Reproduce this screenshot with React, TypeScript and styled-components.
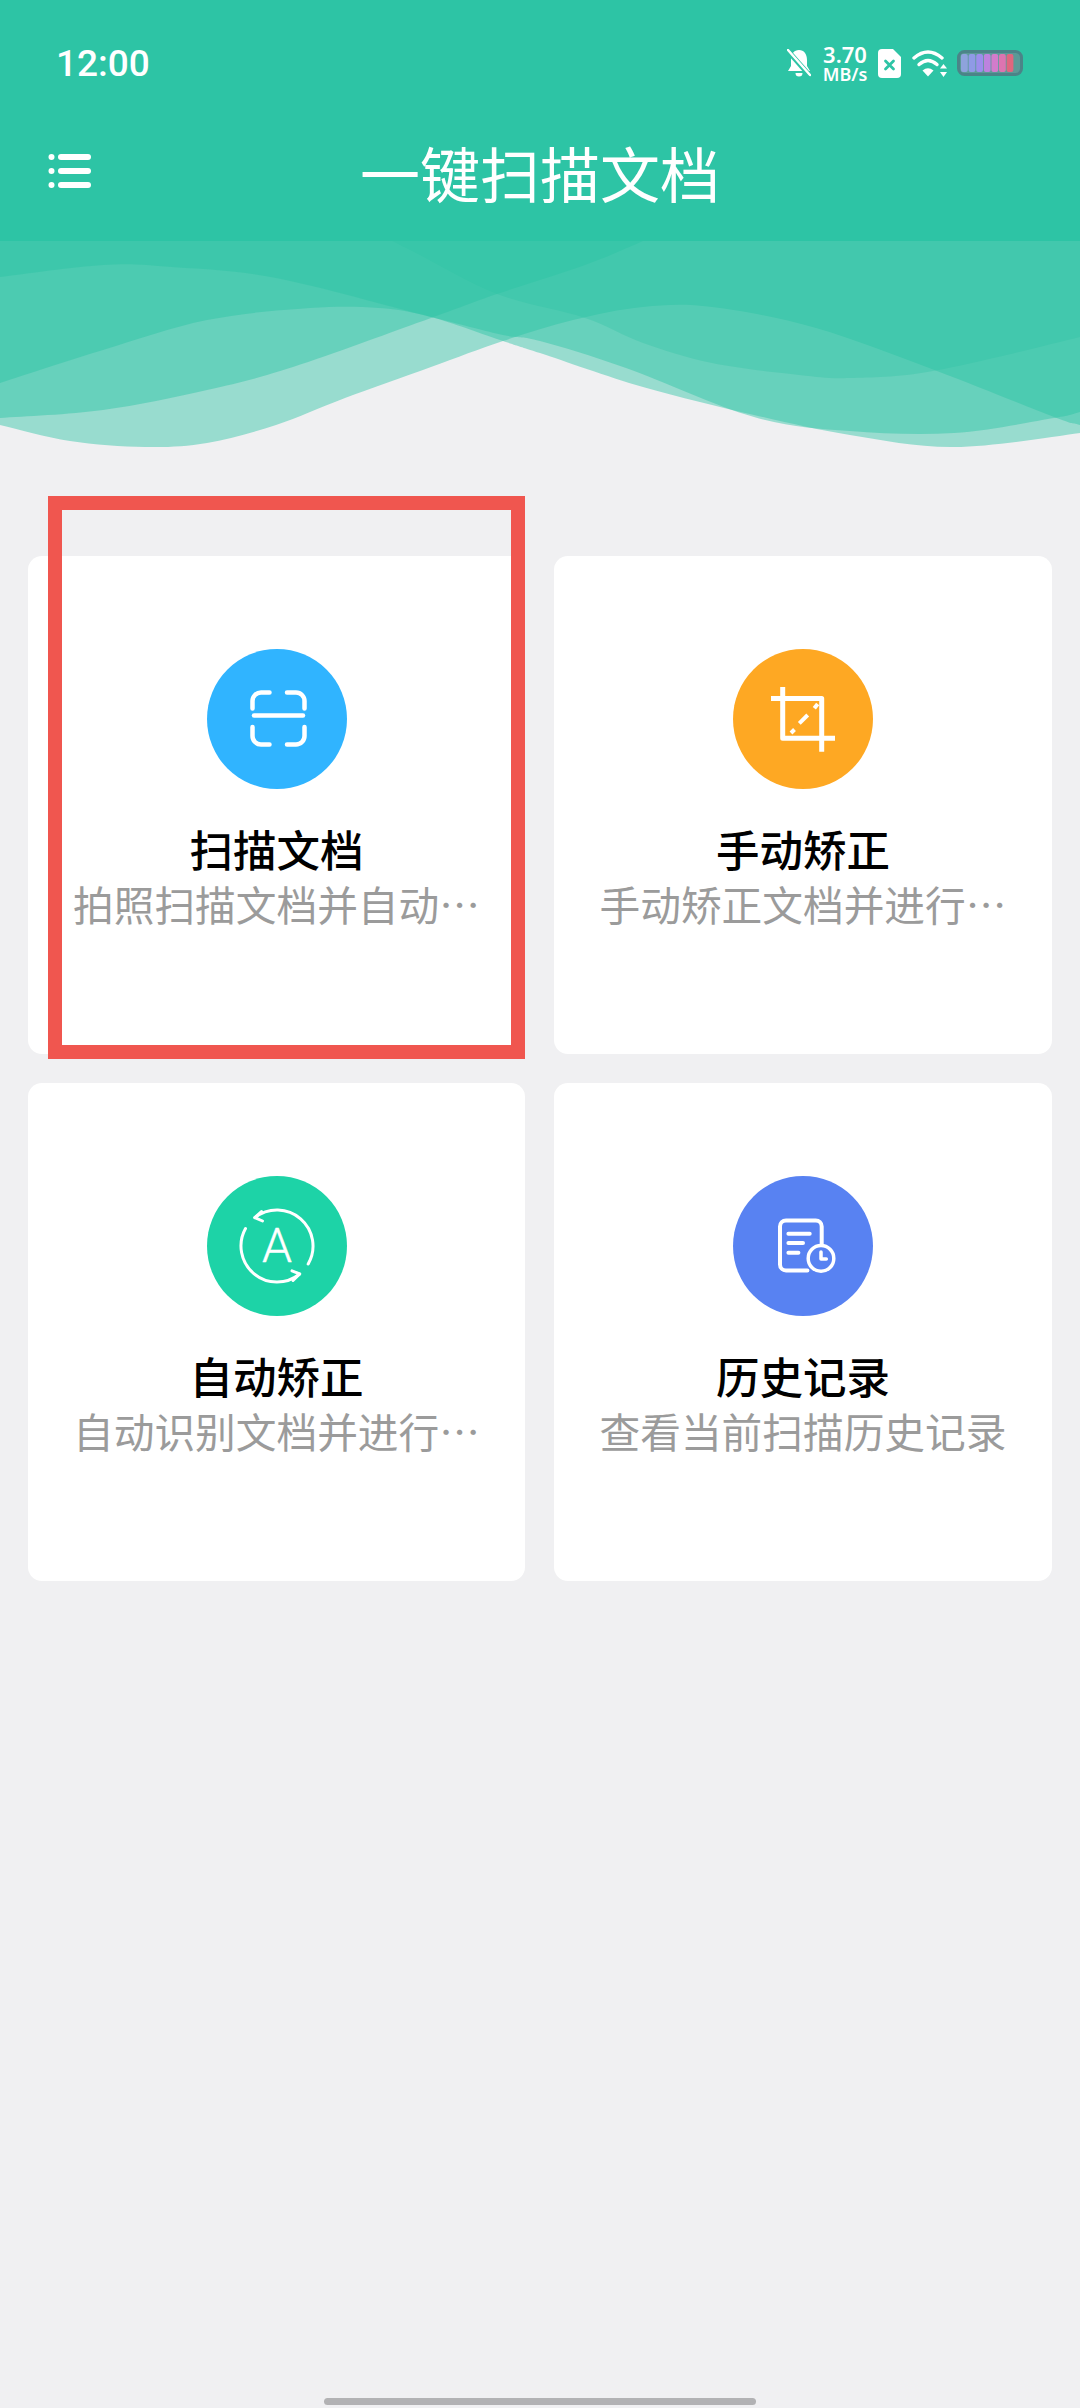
import React from "react";
import styled, { createGlobalStyle } from "styled-components";

const GlobalStyle = createGlobalStyle`
  * {
    box-sizing: border-box;
  }
  html,
  body {
    margin: 0;
    padding: 0;
    background: #f0f0f2;
  }
`;

const brand = "#2dc4a5";
const cjk = `"Noto Sans CJK SC", "Noto Sans", sans-serif`;

const Page = styled.div`
  width: 1080px;
  height: 2408px;
  display: flex;
  flex-direction: column;
  background: #f0f0f2;
  font-family: ${cjk};
  overflow: hidden;
`;

const Header = styled.header`
  height: 241px;
  background: ${brand};
  color: #fff;
`;

const StatusBar = styled.div`
  height: 126px;
  padding: 0 57px 0 56px;
  display: flex;
  align-items: center;
  justify-content: space-between;
`;

const Clock = styled.span`
  padding-top: 1px;
  font-family: Roboto, sans-serif;
  font-size: 37px;
  font-weight: 500;
`;

const StatusIcons = styled.div`
  display: flex;
  align-items: center;
`;

const Speed = styled.div`
  width: 44px;
  display: flex;
  flex-direction: column;
  align-items: center;
  margin: 0 11px 0 12px;
  font-family: "Noto Sans", sans-serif;
  font-weight: 600;
  white-space: nowrap;
`;

const SpeedValue = styled.span`
  font-size: 22px;
  line-height: 21px;
`;

const SpeedUnit = styled.span`
  font-size: 18px;
  line-height: 18px;
`;

const Toolbar = styled.div`
  height: 92px;
  padding: 0 48px;
  display: grid;
  grid-template-columns: 1fr auto 1fr;
  align-items: center;
`;

const Title = styled.h1`
  margin: 0;
  font-size: 60px;
  font-weight: 400;
  line-height: 72px;
`;

const Wave = styled.svg`
  display: block;
  flex: none;
  width: 1080px;
  height: 210px;
`;

const WaveLayer = styled.path<{ $alpha: number }>`
  fill: ${brand};
  fill-opacity: ${(p) => p.$alpha};
`;

const Grid = styled.main`
  display: grid;
  grid-template-columns: 497px 498px;
  grid-auto-rows: 498px;
  gap: 29px;
  padding: 105px 0 0 28px;
`;

const Card = styled.section`
  position: relative;
  display: flex;
  flex-direction: column;
  align-items: center;
  padding-top: 93px;
  background: #fff;
  border-radius: 14px;
`;

const Highlight = styled.div`
  position: absolute;
  left: 20px;
  top: -60px;
  width: 477px;
  height: 563px;
  border: 14px solid #f0564f;
`;

const IconCircle = styled.div<{ $color: string }>`
  width: 140px;
  height: 140px;
  border-radius: 50%;
  background: ${(p) => p.$color};
`;

const CardTitle = styled.h2`
  margin: 34px 0 0;
  color: #000;
  font-size: 43.5px;
  font-weight: 500;
  line-height: 52px;
`;

const CardText = styled.p`
  margin: 5px 0 0;
  color: #9b9b9b;
  font-size: 40.7px;
  font-weight: 400;
  line-height: 48px;
  white-space: nowrap;
`;

const HomeBar = styled.div`
  flex: none;
  align-self: center;
  width: 432px;
  height: 7px;
  margin-top: auto;
  margin-bottom: 3px;
  border-radius: 4px;
  background: #b2b2b4;
`;

const GlyphSvg = styled.svg`
  display: block;
  width: 140px;
  height: 140px;
  fill: none;
  stroke: #fff;
  stroke-linecap: round;
  stroke-linejoin: round;
`;

const GlyphLetter = styled.text`
  fill: #fff;
  stroke: #fff;
  stroke-width: 0.4px;
  font-family: Roboto, sans-serif;
  font-size: 48px;
  font-weight: 300;
`;

// smooth curve through the sampled wave edge points
const smooth = (pts: number[][]) => {
  let d = `M${pts[0][0]} 200 L${pts[0][0]} ${pts[0][1]}`;
  for (let i = 0; i < pts.length - 1; i++) {
    const p0 = pts[Math.max(i - 1, 0)];
    const p1 = pts[i];
    const p2 = pts[i + 1];
    const p3 = pts[Math.min(i + 2, pts.length - 1)];
    const c1x = p1[0] + (p2[0] - p0[0]) / 6;
    const c1y = p1[1] + (p2[1] - p0[1]) / 6;
    const c2x = p2[0] - (p3[0] - p1[0]) / 6;
    const c2y = p2[1] - (p3[1] - p1[1]) / 6;
    d += ` C${c1x} ${c1y} ${c2x} ${c2y} ${p2[0]} ${p2[1]}`;
  }
  return `${d} L${pts[pts.length - 1][0]} 200 Z`;
};

const waves = [
  { alpha: 0.45, pts: [[-40, 415], [0, 425], [70, 441], [145, 447], [207, 443], [276, 425], [345, 398], [431, 367], [503, 341], [573, 320], [643, 307], [712, 307], [816, 328], [937, 371], [1054, 417], [1080, 425], [1120, 436]] },
  { alpha: 0.45, pts: [[-40, 420], [0, 418], [103, 410], [207, 390], [293, 367], [431, 318], [497, 294], [585, 265], [643, 241], [700, 215]] },
  { alpha: 0.32, pts: [[370, 230], [414, 252], [497, 294], [585, 318], [643, 343], [712, 363], [799, 375], [850, 378], [933, 371], [1080, 337], [1120, 325]] },
  { alpha: 0.45, pts: [[-40, 396], [0, 383], [103, 350], [207, 320], [310, 308], [379, 308], [431, 317], [503, 341], [540, 353], [643, 387], [754, 415], [850, 435], [954, 447], [1080, 433], [1120, 424]] },
  { alpha: 0.45, pts: [[-40, 282], [0, 277], [103, 265], [172, 267], [276, 278], [431, 317], [503, 335], [540, 341], [626, 368], [754, 417], [850, 431], [954, 433], [1054, 418], [1080, 412], [1120, 400]] },
];

const batteryBars = ["#8ea3dc", "#8f9ae6", "#9c8eec", "#bd82de", "#d27ccb", "#dd74b0", "#e0667e"];

const BellOff = () => (
  <svg width="24" height="28" viewBox="0 0 24 28">
    <path d="M12 1C17 1 20 5 20 11V17L23 22H1L4 17V11C4 5 7 1 12 1Z" fill="#fff" />
    <path d="M8.5 24H15.5A3.5 3.5 0 0 1 8.5 24Z" fill="#fff" />
    <path d="M1 2L23 27" stroke={brand} strokeWidth="5" />
    <path d="M1 1L23 26" stroke="#fff" strokeWidth="2.4" strokeLinecap="round" />
  </svg>
);

const SimOff = () => (
  <svg width="23" height="29" viewBox="0 0 23 29">
    <path d="M4 0H15L23 8V25A4 4 0 0 1 19 29H4A4 4 0 0 1 0 25V4A4 4 0 0 1 4 0Z" fill="#fff" />
    <path d="M7.5 12L15.5 20M15.5 12L7.5 20" stroke={brand} strokeWidth="2.8" strokeLinecap="round" />
  </svg>
);

const Wifi = () => (
  <svg width="35" height="27" viewBox="0 0 35 27" style={{ marginLeft: 11 }}>
    <g fill="none" stroke="#fff" strokeWidth="3.4" strokeLinecap="round">
      <path d="M2 8Q16 -4 30 8" />
      <path d="M7 14.5Q16 6.5 25 14.5" />
    </g>
    <path d="M10.5 20.5Q16 16 21.5 20.5L16 26.5Z" fill="#fff" />
    <path d="M31.5 14L35 18.5H28Z" fill="#fff" />
    <path d="M31.5 27L35 22H28Z" fill="#fff" />
  </svg>
);

const Battery = () => (
  <svg width="66" height="26" viewBox="0 0 66 26" style={{ marginLeft: 10 }}>
    <rect x="1.5" y="1.5" width="63" height="23" rx="6" fill="#5b9a97" stroke="#4b8488" strokeWidth="3" />
    {batteryBars.map((color, i) => (
      <rect key={color} x={4 + i * 7.6} y="4" width="6.8" height="18" rx="2" fill={color} />
    ))}
  </svg>
);

const MenuIcon = () => (
  <svg width="44" height="36" viewBox="0 0 44 36">
    {[3, 17, 31].map((y) => (
      <g key={y} fill="#fff">
        <circle cx="3.5" cy={y} r="3" />
        <rect x="10" y={y - 3} width="33" height="6" rx="3" />
      </g>
    ))}
  </svg>
);

const ScanIcon = () => (
  <GlyphSvg viewBox="0 0 140 140" strokeWidth="4.5">
    <path d="M62.5 43.5H54A8.5 8.5 0 0 0 45.5 52V59.5" />
    <path d="M80 43.5H89A8.5 8.5 0 0 1 97.5 52V59.5" />
    <path d="M45.5 78V87A8.5 8.5 0 0 0 54 95.5H62.5" />
    <path d="M97.5 78V87A8.5 8.5 0 0 1 89 95.5H80" />
    <path d="M47 66.5H96" />
  </GlyphSvg>
);

const CropIcon = () => (
  <GlyphSvg viewBox="0 0 140 140" strokeWidth="5" style={{ strokeLinecap: "butt" }}>
    <path d="M38 49.5H88.7V102.7" />
    <path d="M49.7 38V89.3H102" />
    <path d="M58 84L61.5 80.5M66.3 74.3L74.7 66M81.3 59.3L84.7 55" strokeWidth="4" />
  </GlyphSvg>
);

const AutoIcon = () => (
  <GlyphSvg viewBox="0 0 140 140" strokeWidth="3">
    <path d="M47.84 41.63A36 36 0 0 1 101.18 88" />
    <path d="M54.5 35.5L47.84 41.63L55.5 45" />
    <path d="M38.51 52.55A36 36 0 0 0 92.66 97.98" />
    <path d="M85 94.8L92.66 97.98L86 104.5" />
    <GlyphLetter x="70" y="85.5" textAnchor="middle">A</GlyphLetter>
  </GlyphSvg>
);

const HistoryIcon = () => (
  <GlyphSvg viewBox="0 0 140 140" strokeWidth="4">
    <path d="M74.4 94.4H53A6 6 0 0 1 47 88.4V50.4A6 6 0 0 1 53 44.4H82.7A6 6 0 0 1 88.7 50.4V69" />
    <path d="M55.4 57.7H76.7M55.4 67H70M55.4 76.7H65.4" />
    <circle cx="88" cy="82.4" r="12.8" strokeWidth="3.5" />
    <path d="M88 76V83H93.3" strokeWidth="3.5" />
  </GlyphSvg>
);

const cards = [
  { title: "扫描文档", text: "拍照扫描文档并自动…", color: "#30b4ff", icon: <ScanIcon />, marked: true },
  { title: "手动矫正", text: "手动矫正文档并进行…", color: "#fea823", icon: <CropIcon /> },
  { title: "自动矫正", text: "自动识别文档并进行…", color: "#1dd3a7", icon: <AutoIcon /> },
  { title: "历史记录", text: "查看当前扫描历史记录", color: "#5882f2", icon: <HistoryIcon /> },
];

export default function App() {
  return (
    <Page>
      <GlobalStyle />
      <Header>
        <StatusBar>
          <Clock>12:00</Clock>
          <StatusIcons>
            <BellOff />
            <Speed>
              <SpeedValue>3.70</SpeedValue>
              <SpeedUnit>MB/s</SpeedUnit>
            </Speed>
            <SimOff />
            <Wifi />
            <Battery />
          </StatusIcons>
        </StatusBar>
        <Toolbar>
          <MenuIcon />
          <Title>一键扫描文档</Title>
        </Toolbar>
      </Header>
      <Wave viewBox="0 241 1080 210">
        {waves.map((wave, i) => (
          <WaveLayer key={i} $alpha={wave.alpha} d={smooth(wave.pts)} />
        ))}
      </Wave>
      <Grid>
        {cards.map((card) => (
          <Card key={card.title}>
            <IconCircle $color={card.color}>{card.icon}</IconCircle>
            <CardTitle>{card.title}</CardTitle>
            <CardText>{card.text}</CardText>
            {card.marked && <Highlight />}
          </Card>
        ))}
      </Grid>
      <HomeBar />
    </Page>
  );
}
